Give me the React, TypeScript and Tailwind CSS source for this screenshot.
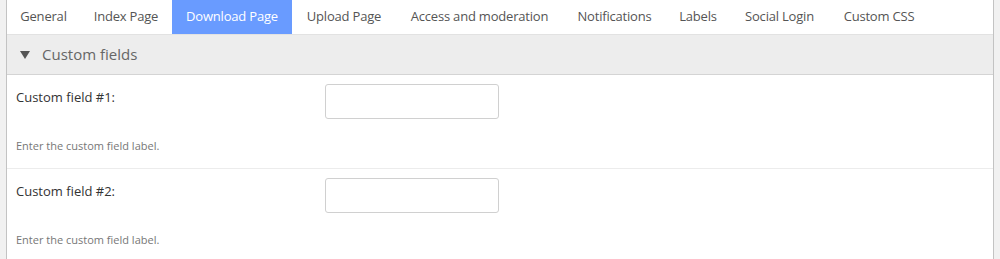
import React from 'react';

const tabs: [string, string][] = [
  ['General', 'w-[73px]'],
  ['Index Page', 'w-[92px]'],
  ['Download Page', 'w-[120px]'],
  ['Upload Page', 'w-[104px]'],
  ['Access and moderation', 'w-[167px]'],
  ['Notifications', 'w-[103px]'],
  ['Labels', 'w-[64px]'],
  ['Social Login', 'w-[99px]'],
  ['Custom CSS', 'w-[100px]'],
];

function App() {
  return (
    <div className="h-[259px] w-[1000px] overflow-hidden bg-[#f1f1f1] px-[6px] font-['Open_Sans',sans-serif]">
      <div className="h-full border-x border-[#c3c3c3] bg-white">
        <div className="flex h-[34px]">
          {tabs.map(([t, w]) => (
            <div
              key={t}
              className={
                t === 'Download Page'
                  ? `flex ${w} items-center justify-center whitespace-nowrap bg-[#699bff] text-[13px] tracking-[-0.2px] text-white`
                  : `flex ${w} items-center justify-center whitespace-nowrap text-[13px] tracking-[-0.2px] text-[#555]`
              }
            >
              {t}
            </div>
          ))}
        </div>
        <div className="flex h-[41px] items-center gap-[12px] border-y border-t-[#e2e2e2] border-b-[#d4d4d4] bg-[#ededed] pl-[13px] text-[15px] text-[#666]">
          <svg width="10" height="8" viewBox="0 0 10 8">
            <path d="M0 0 H10 L5 8 Z" fill="#555" />
          </svg>
          <span>Custom fields</span>
        </div>
        <FieldRow label="Custom field #1:" />
        <div className="border-t border-[#ececec]" />
        <FieldRow label="Custom field #2:" />
      </div>
    </div>
  );
}

function FieldRow({ label }: { label: string }) {
  return (
    <div className="px-[9px] pt-[9px] pb-[13px]">
      <div className="flex">
        <div className="w-[309px] pt-[4px] text-[13px] text-[#333]">{label}</div>
        <input
          type="text"
          className="h-[35px] w-[174px] rounded-[3px] border border-[#d0d0d0] bg-white outline-none"
        />
      </div>
      <p className="mt-[19px] text-[11px] text-[#777]">Enter the custom field label.</p>
    </div>
  );
}

export default App;
